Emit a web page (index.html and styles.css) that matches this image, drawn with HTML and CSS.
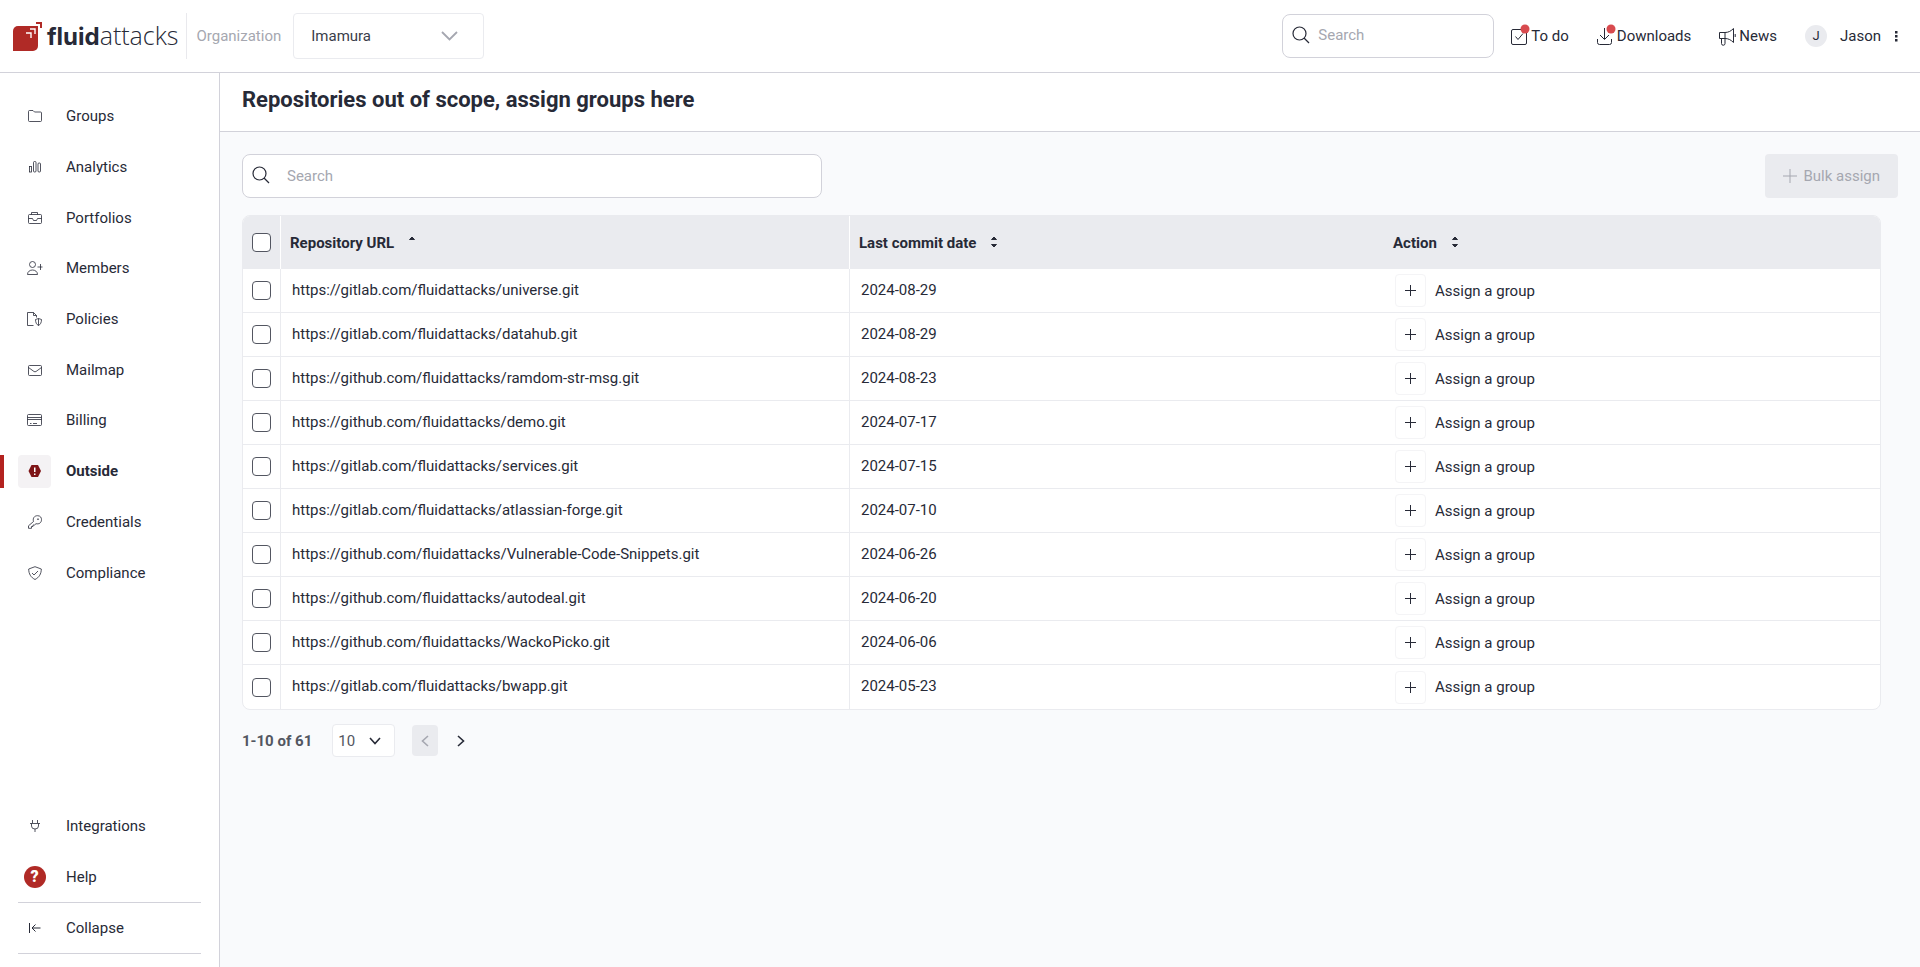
FILE: index.html
```html
<!DOCTYPE html>
<html lang="en">
<head>
    <meta charset="UTF-8">
    <meta name="viewport" content="width=device-width, initial-scale=1.0">
    <title>Outside - Fluid Attacks</title>
    <link rel="stylesheet" href="styles.css">
</head>
<body>

    <!-- Top bar -->
    <header class="topbar">
        <a href="#" class="logo">
            <svg class="logo-mark" width="31" height="31" viewBox="0 0 31 31">
                <path d="M1 10a5 5 0 0 1 5-5h20v20a5 5 0 0 1-5 5H1z" fill="#b02a26"/>
                <path d="M24 1h6v6h-2V3h-4z" fill="#b02a26"/>
                <path d="M18 8h5v5M14 12h5v5" fill="none" stroke="#fff" stroke-width="1.4"/>
            </svg>
            <span class="logo-text"><b>fluid</b>attacks</span>
        </a>
        <div class="organization">
            <label for="organization">Organization</label>
            <div class="select-box">
                <select id="organization">
                    <option>Imamura</option>
                </select>
                <svg width="17" height="10" viewBox="0 0 17 10"><path d="M1 1l7.500 7.500L16 1" fill="none" stroke="currentColor" stroke-width="1.800"/></svg>
            </div>
        </div>
        <div class="topbar-right">
            <div class="search-box">
                <svg width="18" height="18" viewBox="0 0 18 18"><circle cx="7.500" cy="7.500" r="6.500"/><path d="M12 12l5 5"/></svg>
                <input type="search" placeholder="Search" aria-label="Search">
            </div>
            <nav class="top-links">
                <a href="#" class="top-link">
                    <svg width="18" height="20" viewBox="0 0 18 20"><rect x="1.500" y="3.500" width="15" height="15" rx="1.500"/><path d="M5.500 10.500l2.500 3 5-6"/><circle class="dot" cx="15" cy="3" r="4.500"/></svg>
                    To do
                </a>
                <a href="#" class="top-link">
                    <svg width="18" height="20" viewBox="0 0 18 20"><path d="M8.500 2v11M4 9l4.500 4.500L13 9M1.500 13v3.500a2 2 0 0 0 2 2h10a2 2 0 0 0 2-2V13"/><circle class="dot" cx="15" cy="3" r="4.500"/></svg>
                    Downloads
                </a>
                <a href="#" class="top-link">
                    <svg width="18" height="20" viewBox="0 0 18 20"><path d="M1.500 6.500H7c3.500 0 6-1.500 8.500-4v14c-2.500-2.500-5-4-8.500-4H1.500zM7 6.500v6M3.500 12.500v5a1.500 1.500 0 0 0 3.500 0v-5M17.200 8v3"/></svg>
                    News
                </a>
            </nav>
            <button type="button" class="user-menu">
                <span class="avatar">J</span>
                <span class="user-name">Jason</span>
                <svg width="3" height="11" viewBox="0 0 3 11"><path d="M0 0h2.500v2.500H0zM0 4h2.500v2.500H0zM0 8h2.500v2.500H0z"/></svg>
            </button>
        </div>
    </header>

    <div class="layout">
        <!-- Sidebar -->
        <aside class="sidebar">
            <ul class="menu">
                <li><a href="#"><span class="icon"><svg width="16" height="14" viewBox="0 0 16 14"><path d="M1.500 2.500a1 1 0 0 1 1-1h3.500l1.500 1.500h6a1 1 0 0 1 1 1v7.500a1 1 0 0 1-1 1h-11a1 1 0 0 1-1-1z"/></svg></span>Groups</a></li>
                <li><a href="#"><span class="icon"><svg width="16" height="14" viewBox="0 0 16 14"><rect x="2.500" y="6.500" width="2" height="5.500"/><rect x="6.500" y="1.500" width="2.500" height="10.500" rx="1"/><rect x="11" y="3" width="2.500" height="9" rx="1"/></svg></span>Analytics</a></li>
                <li><a href="#"><span class="icon"><svg width="16" height="14" viewBox="0 0 16 14"><rect x="1.500" y="3.500" width="13" height="9" rx="1"/><path d="M4.500 3.500v-2h6v2M1.500 7.500h4l1 2h3l1-2h4"/></svg></span>Portfolios</a></li>
                <li><a href="#"><span class="icon"><svg width="16" height="14" viewBox="0 0 16 14"><circle cx="5.500" cy="3.500" r="3"/><path d="M.5 13.500c0-6 10-6 10 0zM13.500 3v6M10.500 6h5"/></svg></span>Members</a></li>
                <li><a href="#"><span class="icon"><svg width="16" height="14" viewBox="0 0 16 14"><path d="M6.500 13.500H.5V.5h6l3 3v2M6.500.5v3h3M11.500 6.500l3 1c0 3-1 5-3 6-2-1-3-3-3-6zM11.500 6.500v7"/></svg></span>Policies</a></li>
                <li><a href="#"><span class="icon"><svg width="16" height="14" viewBox="0 0 16 14"><rect x="1.500" y="2.500" width="13" height="10" rx="1"/><path d="M1.500 4.500L7 8.500a2 2 0 0 0 2 0l5.500-4"/></svg></span>Mailmap</a></li>
                <li><a href="#"><span class="icon"><svg width="16" height="14" viewBox="0 0 16 14"><rect x=".5" y="1.500" width="14" height="11" rx="1"/><path d="M.5 4.500h14M.5 6.500h14M3 10.500h1.500M6 10.500h4"/></svg></span>Billing</a></li>
                <li class="active"><a href="#"><span class="icon"><svg width="16" height="14" viewBox="0 0 16 14"><path class="badge" d="M4.500 1h6.500l3 6-3 6H4.500l-3-6z"/><path class="mark" d="M7.750 3.500v4.500M7.750 9.500v1.500"/></svg></span>Outside</a></li>
                <li><a href="#"><span class="icon"><svg width="16" height="14" viewBox="0 0 16 14"><path d="M6.500 6.500C5.500 3 7.500.7 10.500.7s4 2 4 4c0 3-2.500 4.800-5.500 4L7.500 10H6v1.500H4.500v1.800h-3v-2.500z"/><circle cx="11" cy="4.200" r=".5"/></svg></span>Credentials</a></li>
                <li><a href="#"><span class="icon"><svg width="16" height="14" viewBox="0 0 16 14"><path d="M8 .7l6.300 2.300c0 5-2.300 8.500-6.300 10.500C4 11.500 1.700 8 1.700 3zM5 7l2 2 4-4"/></svg></span>Compliance</a></li>
                <li class="integrations"><a href="#"><span class="icon"><svg width="16" height="14" viewBox="0 0 16 14"><path d="M5.500 1v3M10.500 1v3M3 4.500h10M4.500 4.500v2.500a3.500 3 0 0 0 7 0V4.500M8 10v3"/></svg></span>Integrations</a></li>
                <li class="support"><a href="#"><span class="icon"><span class="help">?</span></span>Help</a></li>
            </ul>
            <button type="button" class="collapse"><svg width="16" height="14" viewBox="0 0 16 14"><path d="M2.500 2v10M5 7h8.500M8.500 3.500L5 7l3.500 3.500"/></svg>Collapse</button>
        </aside>

        <!-- Content -->
        <main class="content">
            <h1>Repositories out of scope, assign groups here</h1>
            <div class="page">
                <div class="toolbar">
                    <div class="search-box">
                        <svg width="18" height="18" viewBox="0 0 18 18"><circle cx="7.500" cy="7.500" r="6.500"/><path d="M12 12l5 5"/></svg>
                        <input type="search" placeholder="Search" aria-label="Search repositories">
                    </div>
                    <button type="button" class="bulk" disabled>
                        <svg width="14" height="14" viewBox="0 0 14 14"><path d="M7 0v14M0 7h14"/></svg>
                        Bulk assign
                    </button>
                </div>

                <div class="table-box">
                    <table>
                        <colgroup>
                            <col class="col-check">
                            <col class="col-url">
                            <col class="col-date">
                            <col>
                        </colgroup>
                        <thead>
                            <tr>
                                <th><input type="checkbox" aria-label="Select all"></th>
                                <th>Repository URL<svg class="sort" width="8" height="12" viewBox="0 0 8 12"><path d="M1.500 3.500L4 1l2.500 2.500z"/></svg></th>
                                <th>Last commit date<svg class="sort" width="8" height="12" viewBox="0 0 8 12"><path d="M1.500 3.500L4 1l2.500 2.500zM1.500 8.500L4 11l2.500-2.500z"/></svg></th>
                                <th>Action<svg class="sort" width="8" height="12" viewBox="0 0 8 12"><path d="M1.500 3.500L4 1l2.500 2.500zM1.500 8.500L4 11l2.500-2.500z"/></svg></th>
                            </tr>
                        </thead>
                        <tbody id="repositories"></tbody>
                    </table>
                </div>

                <div class="pagination">
                    <span class="total">1-10 of 61</span>
                    <div class="select-box">
                        <select aria-label="Rows per page">
                            <option>10</option>
                        </select>
                        <svg width="12" height="8" viewBox="0 0 12 8"><path d="M1 1l5 5.500L11 1" fill="none" stroke="currentColor" stroke-width="1.600"/></svg>
                    </div>
                    <button type="button" class="page-btn" aria-label="Previous page" disabled><svg width="8" height="12" viewBox="0 0 8 12"><path d="M7 1L1.500 6 7 11"/></svg></button>
                    <button type="button" class="page-btn" aria-label="Next page"><svg width="8" height="12" viewBox="0 0 8 12"><path d="M1 1l5.500 5L1 11"/></svg></button>
                </div>
            </div>
        </main>
    </div>

    <script>
        const repositories = [
            { url: 'https://gitlab.com/fluidattacks/universe.git', date: '2024-08-29' },
            { url: 'https://gitlab.com/fluidattacks/datahub.git', date: '2024-08-29' },
            { url: 'https://github.com/fluidattacks/ramdom-str-msg.git', date: '2024-08-23' },
            { url: 'https://github.com/fluidattacks/demo.git', date: '2024-07-17' },
            { url: 'https://gitlab.com/fluidattacks/services.git', date: '2024-07-15' },
            { url: 'https://gitlab.com/fluidattacks/atlassian-forge.git', date: '2024-07-10' },
            { url: 'https://github.com/fluidattacks/Vulnerable-Code-Snippets.git', date: '2024-06-26' },
            { url: 'https://github.com/fluidattacks/autodeal.git', date: '2024-06-20' },
            { url: 'https://github.com/fluidattacks/WackoPicko.git', date: '2024-06-06' },
            { url: 'https://gitlab.com/fluidattacks/bwapp.git', date: '2024-05-23' }
        ];

        function renderRepositories() {
            const tbody = document.getElementById('repositories');

            repositories.forEach(repository => {
                const row = document.createElement('tr');
                row.innerHTML = `
                    <td><input type="checkbox" aria-label="Select ${repository.url}"></td>
                    <td>${repository.url}</td>
                    <td>${repository.date}</td>
                    <td>
                        <button type="button" class="assign">
                            <span class="plus"><svg width="11" height="11" viewBox="0 0 11 11"><path d="M5.500 0v11M0 5.500h11"/></svg></span>
                            Assign a group
                        </button>
                    </td>
                `;
                tbody.appendChild(row);
            });
        }

        renderRepositories();
    </script>
</body>
</html>
```
FILE: styles.css
```css
* {
    box-sizing: border-box;
}

body {
    margin: 0;
    min-height: 100vh;
    display: flex;
    flex-direction: column;
    font-family: Roboto, "Liberation Sans", sans-serif;
    font-size: 15px;
    line-height: 20px;
    color: #272a37;
    background-color: #fff;
}

a {
    color: inherit;
    text-decoration: none;
}

button,
input,
select {
    font: inherit;
    color: inherit;
}

button {
    padding: 0;
    border: 0;
    background: none;
}

svg {
    flex: none;
    overflow: visible;
    fill: none;
    stroke: currentColor;
}

/* Top bar */
.topbar {
    display: flex;
    align-items: center;
    height: 73px;
    padding: 0 22px 0 12px;
    border-bottom: 1px solid #d2d2da;
}

.logo {
    display: flex;
    align-items: center;
    gap: 4px;
}

.logo-mark {
    stroke: none;
}

.logo-text {
    font-family: "Open Sans", sans-serif;
    font-size: 25px;
    font-weight: 300;
    line-height: 32px;
}

.logo-text b {
    font-family: Inter, sans-serif;
    font-size: 24px;
    font-weight: 700;
}

.organization {
    display: flex;
    align-items: center;
    gap: 12px;
    height: 46px;
    margin-left: 8px;
    padding-left: 9px;
    border-left: 1px solid #e9e9ed;
    color: #a5a7b0;
}

.select-box {
    position: relative;
}

.select-box select {
    appearance: none;
    border: 1px solid #eaebef;
    border-radius: 4px;
    background-color: #fff;
    color: #535661;
}

.select-box svg {
    position: absolute;
    top: 50%;
    transform: translateY(-50%);
    pointer-events: none;
}

.organization select {
    display: block;
    width: 191px;
    height: 46px;
    padding: 0 17px;
    color: #3a3d4a;
}

.organization .select-box svg {
    right: 26px;
}

.topbar-right {
    display: flex;
    align-items: center;
    margin-left: auto;
}

.search-box {
    position: relative;
}

.search-box svg {
    position: absolute;
    top: 12px;
    left: 10px;
    stroke-width: 1.2;
}

.search-box input {
    display: block;
    width: 100%;
    height: 44px;
    border: 1px solid #d2d2da;
    border-radius: 8px;
    background-color: #fff;
}

.search-box input::placeholder {
    color: #a5a7b0;
    opacity: 1;
}

.topbar .search-box {
    width: 212px;
}

.topbar .search-box input {
    padding: 0 12px 2px 35px;
}

.top-links {
    display: flex;
    gap: 27px;
    margin-left: 16px;
}

.top-link {
    display: flex;
    align-items: center;
    gap: 3px;
}

.dot {
    fill: #d84a4e;
    stroke: none;
}

.user-menu {
    display: flex;
    align-items: center;
    margin-left: 28px;
}

.avatar {
    width: 22px;
    height: 22px;
    margin-right: 13px;
    border-radius: 50%;
    background-color: #eaebef;
    font-size: 13px;
    line-height: 22px;
}

.user-name {
    margin-right: 14px;
}

.user-menu svg {
    fill: currentColor;
    stroke: none;
}

.layout {
    display: flex;
    flex: 1;
}

/* Sidebar */
.sidebar {
    display: flex;
    flex-direction: column;
    width: 220px;
    padding: 18px 18px 13px;
    border-right: 1px solid #d2d2da;
}

/* 10 items, an empty space as tall as 4, then the 2 extra ones */
.menu {
    display: grid;
    flex: 1;
    grid-template-rows: repeat(10, 1fr) 4fr repeat(2, 1fr);
    margin: 0;
    padding: 0;
    list-style: none;
}

.menu li {
    position: relative;
    display: flex;
    align-items: center;
}

.menu .integrations {
    grid-row: 12;
}

.menu .support {
    grid-row: 13;
}

.menu a {
    display: flex;
    align-items: center;
    gap: 15px;
}

.icon {
    display: flex;
    align-items: center;
    justify-content: center;
    width: 33px;
    height: 33px;
    border-radius: 4px;
    stroke-width: 0.8;
}

.active {
    font-weight: 700;
}

.active .icon {
    background-color: #f4f2f4;
}

.active::before {
    content: "";
    position: absolute;
    left: -18px;
    width: 4px;
    height: 33px;
    background-color: #b3221f;
}

.badge {
    fill: #7e1517;
    stroke: none;
}

.mark {
    stroke: #fff;
    stroke-width: 1.5;
}

.help {
    width: 22px;
    height: 22px;
    border-radius: 50%;
    background-color: #b02a26;
    color: #fff;
    font-size: 16px;
    font-weight: 900;
    line-height: 22px;
    text-align: center;
}

.collapse {
    display: flex;
    align-items: center;
    gap: 23px;
    height: 52px;
    padding-left: 9px;
    border-top: 1px solid #d2d2da;
    border-bottom: 1px solid #d2d2da;
}

/* Content */
.content {
    flex: 1;
    min-width: 0;
    background-color: #f9fafc;
}

h1 {
    margin: 0;
    padding: 13px 22px 17px;
    border-bottom: 1px solid #d2d2da;
    background-color: #fff;
    font-size: 22px;
    font-weight: 700;
    line-height: 28px;
}

.page {
    padding: 22px;
}

.toolbar {
    display: flex;
    justify-content: space-between;
}

.toolbar .search-box {
    width: 35%;
}

.toolbar .search-box input {
    padding: 0 12px 0 44px;
}

.bulk {
    display: flex;
    align-items: center;
    gap: 6px;
    padding: 0 18px;
    border-radius: 4px;
    background-color: #eaebef;
    color: #a5a7b0;
}

.table-box {
    margin: 17px 17px 0 0;
    border: 1px solid #eaebef;
    border-radius: 8px;
    overflow: hidden;
    background-color: #fff;
}

table {
    width: 100%;
    table-layout: fixed;
    border-collapse: separate;
    border-spacing: 0;
}

.col-check {
    width: 38px;
}

.col-url {
    width: 569px;
}

.col-date {
    width: 534px;
}

th {
    height: 53px;
    padding: 0 9px;
    background-color: #eaebef;
    text-align: left;
    font-weight: 700;
}

th:nth-child(-n+2) {
    border-right: 1px solid #fff;
}

td {
    height: 44px;
    padding: 0 10px 2px 11px;
    border-bottom: 1px solid #eaebef;
}

td:nth-child(-n+2) {
    border-right: 1px solid #eaebef;
}

tr:last-child td {
    border-bottom: 0;
}

th:first-child,
td:first-child {
    padding: 0 9px;
}

td:last-child {
    padding: 0 11px;
}

table input {
    appearance: none;
    display: block;
    width: 19px;
    height: 19px;
    margin: 0;
    border: 1px solid #535661;
    border-radius: 4px;
    background-color: #fff;
}

.sort {
    margin-left: 14px;
    fill: currentColor;
    stroke-linejoin: round;
}

.assign {
    display: flex;
    align-items: center;
    gap: 9px;
}

.plus {
    display: flex;
    align-items: center;
    justify-content: center;
    width: 31px;
    height: 33px;
    border: 1px solid #f4f4f6;
    border-radius: 4px;
}

.pagination {
    display: flex;
    align-items: center;
    margin-top: 14px;
}

.total {
    margin-right: 20px;
    color: #535661;
    font-weight: 700;
}

.pagination select {
    display: block;
    width: 63px;
    height: 33px;
    padding: 0 5px;
}

.pagination .select-box {
    margin-right: 17px;
}

.pagination .select-box svg {
    right: 14px;
    color: #272a37;
}

.page-btn {
    display: flex;
    align-items: center;
    justify-content: center;
    width: 26px;
    height: 31px;
    margin-right: 10px;
    border-radius: 4px;
    stroke-width: 1.6;
}

.page-btn:disabled {
    background-color: #eaebef;
    color: #a5a7b0;
}
```
